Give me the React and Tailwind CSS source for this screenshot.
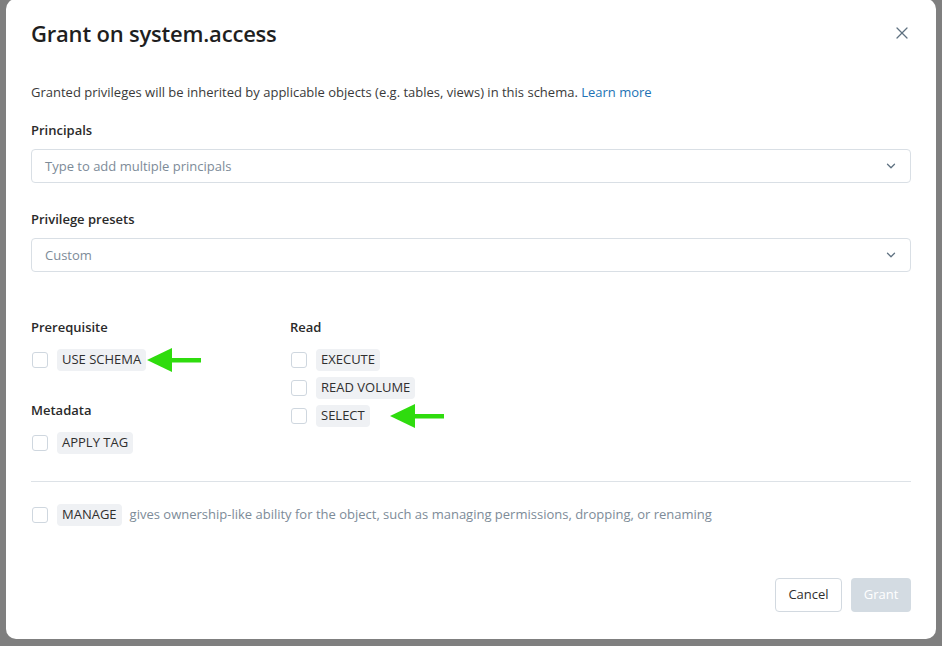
import { X, ChevronDown } from "lucide-react";

// --- Green pointer arrow (annotation) ---
const Arrow = ({ className }) => (
  <svg width="54" height="24" viewBox="0 0 54 24" className={className}>
    <polygon points="0,12 25,0 25,24" fill="#2fdc0e" />
    <rect x="22" y="10" width="32" height="4.5" fill="#2fdc0e" />
  </svg>
);

// --- Checkbox row with privilege tag ---
const Privilege = ({ name, arrow, arrowGap = "ml-0" }) => (
  <div className="flex items-center h-[22px]">
    <span className="w-4 h-4 rounded-[3px] border border-[#cfd7df] bg-white ml-px" />
    <span className="ml-[9px] px-[5px] h-[22px] flex items-center rounded-[4px] bg-[#eff1f4] text-[13px] text-[#2f2f2f]">
      {name}
    </span>
    {arrow && <Arrow className={arrowGap} />}
  </div>
);

const Select = ({ placeholder }) => (
  <div className="h-[34px] rounded-[4px] border border-[#d9dfe5] flex items-center justify-between pl-[13px] pr-[12px]">
    <span className="text-[13px] text-[#7d8b98] translate-y-px">{placeholder}</span>
    <ChevronDown size={14} strokeWidth={2.2} className="text-[#5f7181]" />
  </div>
);

const App = () => {
  return (
    <div
      className="w-[942px] h-[646px] bg-[#7f7f7f] px-[6px] overflow-hidden"
      style={{ fontFamily: '"Open Sans", "Liberation Sans", sans-serif' }}
    >
      <div className="h-[640px] bg-white rounded-[10px] px-[25px] pt-[19px] pb-[27px] flex flex-col -mt-px">
        {/* Header */}
        <div className="flex items-center justify-between h-[28px] mt-px">
          <h1 className="text-[22px] leading-[28px] font-semibold text-[#1f1f1f] tracking-[-0.2px]">
            Grant on system.access
          </h1>
          <X size={20} strokeWidth={1.5} className="text-[#5f7181] -mr-[1px]" />
        </div>

        <p className="mt-[35px] text-[13px] leading-[20px] text-[#3a3a3a]">
          Granted privileges will be inherited by applicable objects (e.g. tables, views) in this schema.{" "}
          <span className="text-[#2272b4]">Learn more</span>
        </p>

        {/* Principals */}
        <label className="mt-[18px] text-[13px] leading-[20px] font-semibold text-[#2a2a2a]">
          Principals
        </label>
        <div className="mt-[9px]">
          <Select placeholder="Type to add multiple principals" />
        </div>

        {/* Presets */}
        <label className="mt-[26px] text-[13px] leading-[20px] font-semibold text-[#2a2a2a]">
          Privilege presets
        </label>
        <div className="mt-[9px]">
          <Select placeholder="Custom" />
        </div>

        {/* Privilege groups */}
        <div className="mt-[45px] grid grid-cols-[259px_1fr]">
          <div className="flex flex-col">
            <div className="text-[13px] leading-[20px] font-semibold text-[#2a2a2a]">Prerequisite</div>
            <div className="mt-[12px]">
              <Privilege name="USE SCHEMA" arrow arrowGap="ml-px" />
            </div>
            <div className="mt-[29px] text-[13px] leading-[20px] font-semibold text-[#2a2a2a]">Metadata</div>
            <div className="mt-[12px]">
              <Privilege name="APPLY TAG" />
            </div>
          </div>
          <div className="flex flex-col">
            <div className="text-[13px] leading-[20px] font-semibold text-[#2a2a2a]">Read</div>
            <div className="mt-[12px] flex flex-col gap-[6px]">
              <Privilege name="EXECUTE" />
              <Privilege name="READ VOLUME" />
              <Privilege name="SELECT" arrow arrowGap="ml-[20px]" />
            </div>
          </div>
        </div>

        <div className="mt-[27px] border-t border-[#dde2e7]" />

        {/* Manage */}
        <div className="mt-[22px] flex items-center">
          <Privilege name="MANAGE" />
          <span className="ml-[8px] text-[13px] text-[#7d8b98]">
            gives ownership-like ability for the object, such as managing permissions, dropping, or renaming
          </span>
        </div>

        {/* Footer */}
        <div className="mt-auto flex justify-end gap-[9px]">
          <button className="h-[34px] w-[67px] rounded-[4px] border border-[#d2d9e0] bg-white text-[13px] text-[#2f2f2f]">
            Cancel
          </button>
          <button className="h-[34px] w-[60px] rounded-[4px] bg-[#d3dbe2] text-[13px] text-white">
            Grant
          </button>
        </div>
      </div>
    </div>
  );
};

export default App;
